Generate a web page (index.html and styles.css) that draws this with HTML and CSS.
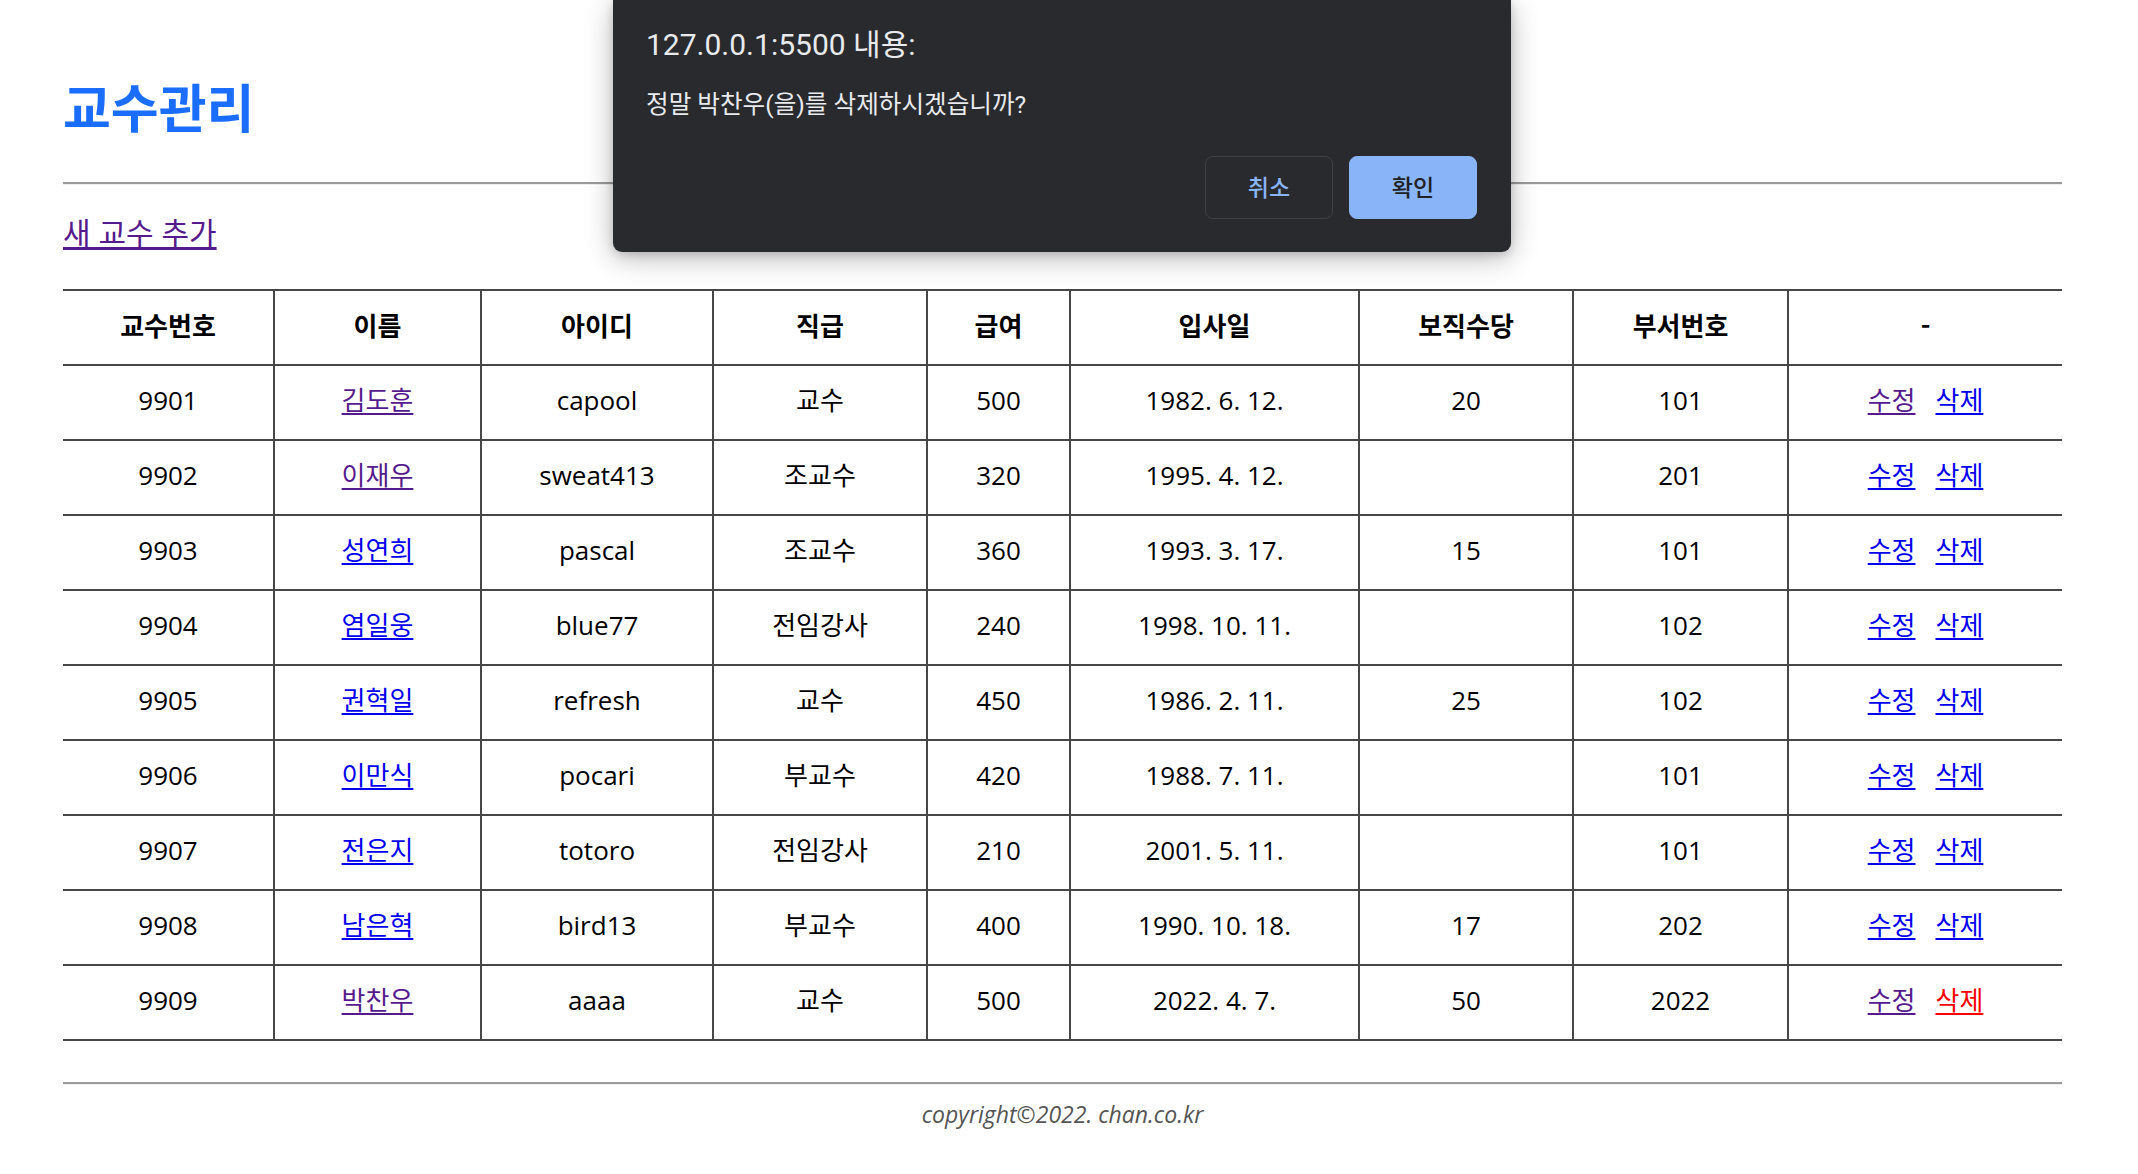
FILE: index.html
```html
<!DOCTYPE html>
<html lang="ko">
<head>
<meta charset="utf-8">
<title>교수관리</title>
<link rel="stylesheet" href="styles.css">
</head>
<body>
<div class="page">
  <h1 class="title">교수관리</h1>
  <hr class="rule">
  <p class="add"><a class="lnk visited" href="#">새 교수 추가</a></p>
  <table class="prof">
    <colgroup>
      <col style="width:211px"><col style="width:207px"><col style="width:232px"><col style="width:214px"><col style="width:143px"><col style="width:289px"><col style="width:214px"><col style="width:215px"><col style="width:274px">
    </colgroup>
    <thead>
      <tr><th>교수번호</th><th>이름</th><th>아이디</th><th>직급</th><th>급여</th><th>입사일</th><th>보직수당</th><th>부서번호</th><th>-</th></tr>
    </thead>
    <tbody>
      <tr><td>9901</td><td><a class="lnk visited" href="#">김도훈</a></td><td>capool</td><td>교수</td><td>500</td><td>1982. 6. 12.</td><td>20</td><td>101</td><td><a class="lnk visited" href="#">수정</a><a class="lnk act" href="#">삭제</a></td></tr>
      <tr><td>9902</td><td><a class="lnk visited" href="#">이재우</a></td><td>sweat413</td><td>조교수</td><td>320</td><td>1995. 4. 12.</td><td></td><td>201</td><td><a class="lnk" href="#">수정</a><a class="lnk act" href="#">삭제</a></td></tr>
      <tr><td>9903</td><td><a class="lnk" href="#">성연희</a></td><td>pascal</td><td>조교수</td><td>360</td><td>1993. 3. 17.</td><td>15</td><td>101</td><td><a class="lnk" href="#">수정</a><a class="lnk act" href="#">삭제</a></td></tr>
      <tr><td>9904</td><td><a class="lnk" href="#">염일웅</a></td><td>blue77</td><td>전임강사</td><td>240</td><td>1998. 10. 11.</td><td></td><td>102</td><td><a class="lnk" href="#">수정</a><a class="lnk act" href="#">삭제</a></td></tr>
      <tr><td>9905</td><td><a class="lnk" href="#">권혁일</a></td><td>refresh</td><td>교수</td><td>450</td><td>1986. 2. 11.</td><td>25</td><td>102</td><td><a class="lnk" href="#">수정</a><a class="lnk act" href="#">삭제</a></td></tr>
      <tr><td>9906</td><td><a class="lnk" href="#">이만식</a></td><td>pocari</td><td>부교수</td><td>420</td><td>1988. 7. 11.</td><td></td><td>101</td><td><a class="lnk" href="#">수정</a><a class="lnk act" href="#">삭제</a></td></tr>
      <tr><td>9907</td><td><a class="lnk" href="#">전은지</a></td><td>totoro</td><td>전임강사</td><td>210</td><td>2001. 5. 11.</td><td></td><td>101</td><td><a class="lnk" href="#">수정</a><a class="lnk act" href="#">삭제</a></td></tr>
      <tr><td>9908</td><td><a class="lnk" href="#">남은혁</a></td><td>bird13</td><td>부교수</td><td>400</td><td>1990. 10. 18.</td><td>17</td><td>202</td><td><a class="lnk" href="#">수정</a><a class="lnk act" href="#">삭제</a></td></tr>
      <tr><td>9909</td><td><a class="lnk visited" href="#">박찬우</a></td><td>aaaa</td><td>교수</td><td>500</td><td>2022. 4. 7.</td><td>50</td><td>2022</td><td><a class="lnk visited" href="#">수정</a><a class="lnk act red" href="#">삭제</a></td></tr>
    </tbody>
  </table>
  <hr class="rule rule-bottom">
  <footer class="foot">copyright©2022. chan.co.kr</footer>
</div>

<div class="dialog">
  <div class="dlg-title">127.0.0.1:5500 내용:</div>
  <div class="dlg-msg">정말 박찬우(을)를 삭제하시겠습니까?</div>
  <div class="dlg-btns">
    <button class="btn btn-cancel" type="button">취소</button>
    <button class="btn btn-ok" type="button">확인</button>
  </div>
</div>
</body>
</html>
```

FILE: styles.css
```css
html, body {
  margin: 0;
  padding: 0;
  background: #ffffff;
}
body {
  font-family: "Open Sans", "Noto Sans CJK KR", sans-serif;
  color: #000;
}
.page {
  width: 1999px;
  padding: 76px 0 40px 63px;
}
.title {
  margin: 0;
  font-family: "Noto Sans CJK KR", sans-serif;
  font-weight: 700;
  font-size: 52px;
  line-height: 60px;
  color: #1a6dff;
}
.rule {
  margin: 46px 0 0 0;
  height: 0;
  border: 0;
  border-top: 2px solid #9b9b9b;
  border-bottom: 1px solid #efefef;
}
.add {
  margin: 30px 0 0 0;
  font-size: 30px;
  line-height: 35px;
}
.lnk {
  color: #0000ee;
  text-decoration: underline;
  text-underline-offset: 3px;
}
.lnk.visited {
  color: #551a8b;
}
.lnk.red {
  color: #ff0000;
}
.prof {
  margin-top: 39px;
  width: 1999px;
  table-layout: fixed;
  border-collapse: collapse;
  font-size: 26px;
}
.prof th, .prof td {
  border: 2px solid #474747;
  height: 67px;
  padding: 0 0 6px 0;
  text-align: center;
  vertical-align: middle;
  line-height: 30px;
}
.prof th {
  font-weight: 700;
  font-family: "Noto Sans CJK KR", sans-serif;
  font-size: 26px;
}
.prof th:first-child, .prof td:first-child {
  border-left: none;
}
.prof th:last-child, .prof td:last-child {
  border-right: none;
}
.prof .act {
  margin-left: 20px;
}
.rule-bottom {
  margin-top: 41px;
}
.foot {
  margin-top: 13px;
  text-align: center;
  font-style: italic;
  font-size: 23px;
  line-height: 32px;
  color: #555555;
}

.dialog {
  position: absolute;
  top: 0;
  left: 613px;
  width: 898px;
  height: 252px;
  box-sizing: border-box;
  padding: 26px 34px 33px 33px;
  background: #292a2d;
  border-radius: 0 0 9px 9px;
  box-shadow: 0 6px 28px rgba(0, 0, 0, 0.28), 0 2px 8px rgba(0, 0, 0, 0.15);
  display: flex;
  flex-direction: column;
  font-family: "Roboto", "Noto Sans CJK KR", sans-serif;
  color: #e8eaed;
}
.dlg-title {
  font-size: 30px;
  line-height: 38px;
}
.dlg-msg {
  margin-top: 26px;
  font-size: 24.6px;
  line-height: 30px;
}
.dlg-btns {
  margin-top: auto;
  display: flex;
  justify-content: flex-end;
  gap: 16px;
}
.btn {
  width: 128px;
  height: 63px;
  box-sizing: border-box;
  border-radius: 8px;
  font-family: "Roboto", "Noto Sans CJK KR", sans-serif;
  font-size: 23px;
  font-weight: 500;
  padding: 0 0 4px 0;
}
.btn-cancel {
  background: #292a2d;
  border: 1px solid #3f4145;
  color: #8ab4f8;
}
.btn-ok {
  background: #8ab4f8;
  border: 1px solid #8ab4f8;
  color: #202124;
}
```
